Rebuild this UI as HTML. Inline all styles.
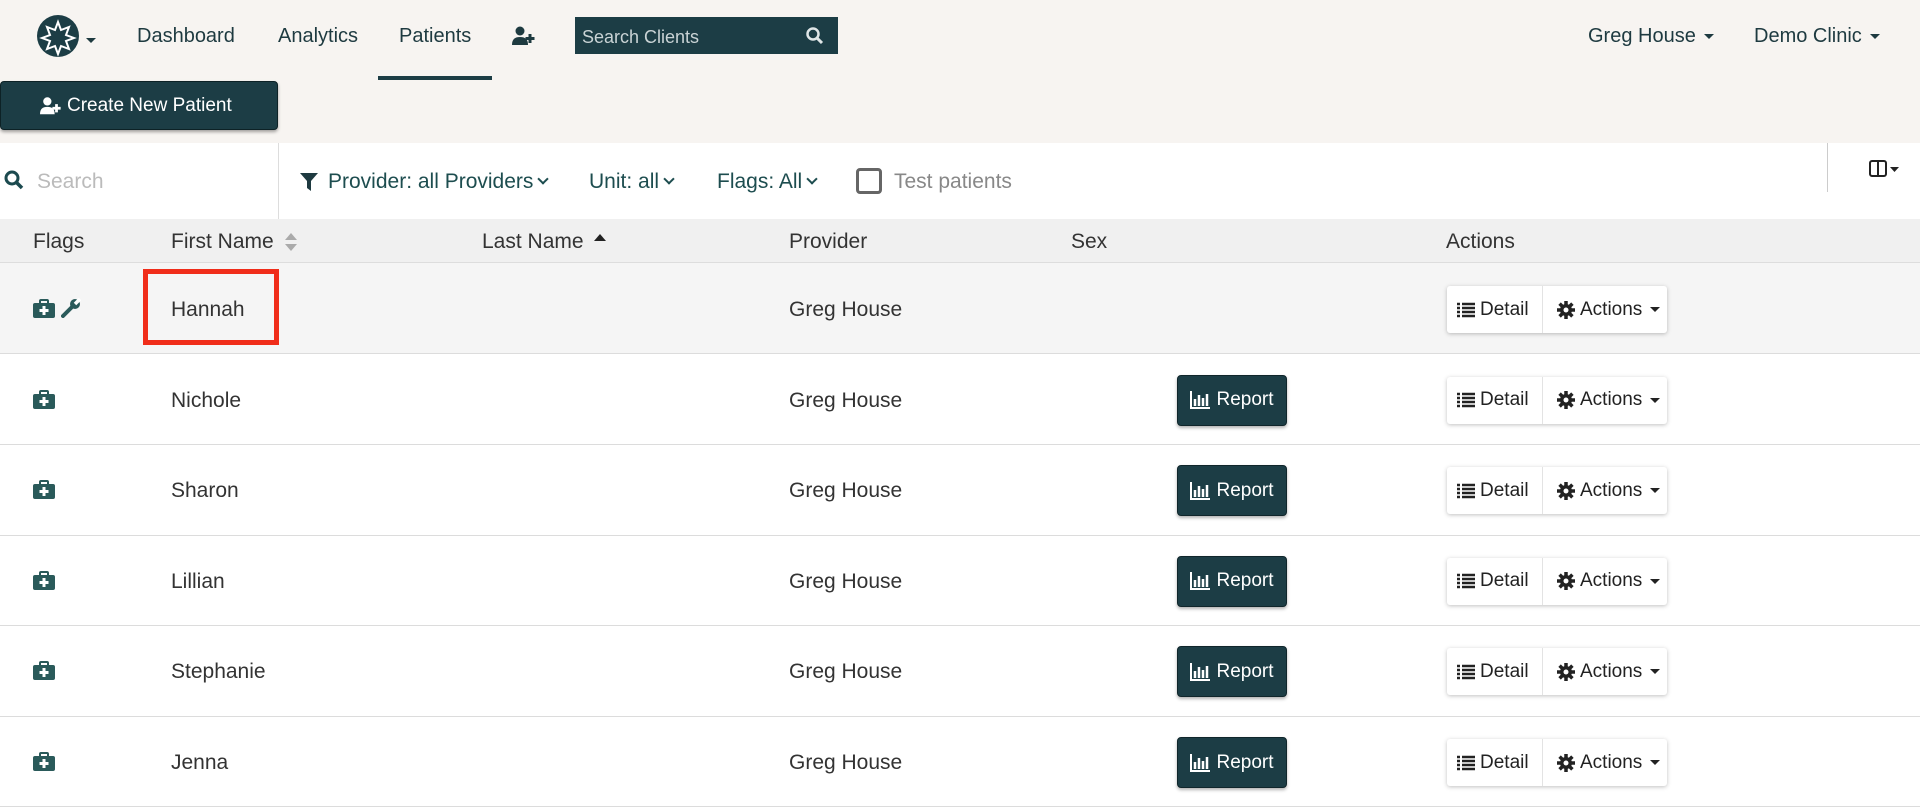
<!DOCTYPE html>
<html><head><meta charset="utf-8"><style>
*{margin:0;padding:0;box-sizing:border-box}
body{width:1920px;height:807px;overflow:hidden;background:#fff;font-family:"Liberation Sans",sans-serif;color:#333;position:relative}
.a{position:absolute;white-space:nowrap}
.nav{color:#1e3a40;font-size:20px}
.car{display:inline-block;width:0;height:0;border-left:5px solid transparent;border-right:5px solid transparent;border-top:5px solid #1e3a40;vertical-align:middle;margin-left:8px}
.row{position:absolute;left:0;width:1920px;height:91px;border-bottom:1.5px solid #dcdcdc}
.t{font-size:21px;color:#333}
.chev{display:inline-block;width:8px;height:8px;border-right:2px solid #1d4d4f;border-bottom:2px solid #1d4d4f;transform:rotate(45deg);vertical-align:middle;margin:-6px 0 0 6px}
.rep{position:absolute;left:1177px;width:110px;height:51px;background:#1c3d45;border:1px solid #10262b;border-radius:4px;color:#fff;font-size:19px;display:flex;align-items:center;justify-content:center;gap:6px;box-shadow:0 2px 3px rgba(0,0,0,.3)}
.grp{position:absolute;left:1447px;width:220px;height:47px;background:#fff;border-radius:3px;box-shadow:0 1px 4px rgba(0,0,0,.25);font-size:19px;color:#222}
.grp span{position:absolute;top:0;height:47px;display:flex;align-items:center;gap:5px}
</style></head><body>
<div class="a" style="left:0;top:0;width:1920px;height:143px;background:#f7f4f1"></div>
<svg class="a" style="left:36px;top:14px" width="44" height="44" viewBox="0 0 44 44"><circle cx="22" cy="22" r="21" fill="#1c3d45"/><path d="M22 8l3 8 8-3-3 8 8 3-8 3 3 8-8-3-3 8-3-8-8 3 3-8-8-3 8-3-3-8 8 3z" fill="none" stroke="#fff" stroke-width="2"/></svg>
<div class="a" style="left:86px;top:32px"><span class="car" style="margin:0"></span></div>
<div class="a nav" style="left:137px;top:25px">Dashboard</div>
<div class="a nav" style="left:278px;top:25px">Analytics</div>
<div class="a nav" style="left:399px;top:25px">Patients</div>
<div class="a" style="left:378px;top:76px;width:114px;height:4px;background:#1c3d45"></div>
<svg class="a" style="left:512px;top:26px" width="24" height="20" viewBox="0 0 24 20"><circle cx="8" cy="5" r="4.5" fill="#1e3a40"/><path d="M0 19c0-6 3-8 8-8s8 2 8 8z" fill="#1e3a40"/><path d="M18 8v9M13.5 12.5h9" stroke="#1e3a40" stroke-width="3"/></svg>
<div class="a" style="left:575px;top:17px;width:263px;height:37px;background:#1c3d45"></div>
<div class="a" style="left:582px;top:27px;color:#c9d3d5;font-size:18px">Search Clients</div>
<svg class="a" style="left:806px;top:27px" width="18" height="18" viewBox="0 0 18 18"><circle cx="7" cy="7" r="5.5" fill="none" stroke="#dfe6e7" stroke-width="2.5"/><path d="M11 11l5 5" stroke="#dfe6e7" stroke-width="3"/></svg>
<div class="a nav" style="left:1588px;top:25px">Greg House<span class="car"></span></div>
<div class="a nav" style="left:1754px;top:25px">Demo Clinic<span class="car"></span></div>
<div class="a" style="left:0;top:81px;width:278px;height:49px;background:#1c3d45;border:1px solid #0d2226;border-radius:4px;box-shadow:0 2px 3px rgba(0,0,0,.35)"></div>
<svg class="a" style="left:40px;top:96px" width="22" height="20" viewBox="0 0 24 20"><circle cx="8" cy="5" r="4.5" fill="#fff"/><path d="M0 19c0-6 3-8 8-8s8 2 8 8z" fill="#fff"/><path d="M18 8v9M13.5 12.5h9" stroke="#fff" stroke-width="3"/></svg>
<div class="a" style="left:67px;top:95px;color:#fff;font-size:19px">Create New Patient</div>
<svg class="a" style="left:4px;top:170px" width="20" height="20" viewBox="0 0 20 20"><circle cx="8" cy="8" r="6" fill="none" stroke="#1c4a4f" stroke-width="3"/><path d="M12 12l6 6" stroke="#1c4a4f" stroke-width="3.5"/></svg>
<div class="a" style="left:37px;top:170px;color:#bbb;font-size:21px">Search</div>
<div class="a" style="left:278px;top:143px;width:1px;height:76px;background:#ddd"></div>
<svg class="a" style="left:300px;top:173px" width="18" height="18" viewBox="0 0 18 18"><path d="M0 0h18l-7 8v10l-4-3V8z" fill="#1e3a40"/></svg>
<div class="a" style="left:328px;top:170px;color:#1d4d4f;font-size:21px">Provider: all Providers<span class="chev"></span></div>
<div class="a" style="left:589px;top:170px;color:#1d4d4f;font-size:21px">Unit: all<span class="chev"></span></div>
<div class="a" style="left:717px;top:170px;color:#1d4d4f;font-size:21px">Flags: All<span class="chev"></span></div>
<div class="a" style="left:856px;top:168px;width:26px;height:26px;border:3px solid #666;border-radius:4px"></div>
<div class="a" style="left:894px;top:170px;color:#888;font-size:21px">Test patients</div>
<div class="a" style="left:1827px;top:143px;width:1px;height:49px;background:#ccc"></div>
<svg class="a" style="left:1869px;top:160px" width="34" height="18" viewBox="0 0 34 18"><rect x="1" y="1" width="16" height="15" rx="2" fill="none" stroke="#222" stroke-width="2"/><path d="M9 1v15" stroke="#222" stroke-width="2"/><path d="M21 7h9l-4.5 5z" fill="#222"/></svg>
<div class="a" style="left:0;top:219px;width:1920px;height:44px;background:#f0f0f0;border-bottom:1.5px solid #ddd"></div>
<div class="a t" style="left:33px;top:230px">Flags</div>
<div class="a t" style="left:171px;top:230px">First Name</div>
<svg class="a" style="left:285px;top:232px" width="12" height="20" viewBox="0 0 12 20"><path d="M0 8l6-7 6 7zM0 12l6 7 6-7z" fill="#aaa"/></svg>
<div class="a t" style="left:482px;top:230px">Last Name</div>
<svg class="a" style="left:594px;top:233px" width="12" height="8" viewBox="0 0 12 8"><path d="M0 8l6-7 6 7z" fill="#222"/></svg>
<div class="a t" style="left:789px;top:230px">Provider</div>
<div class="a t" style="left:1071px;top:230px">Sex</div>
<div class="a t" style="left:1446px;top:230px">Actions</div>

<div class="row" style="top:263px;background:#f5f5f5"></div>
<div class="row" style="top:354px"></div>
<div class="row" style="top:445px"></div>
<div class="row" style="top:535px"></div>
<div class="row" style="top:626px"></div>
<div class="row" style="top:716px"></div>

<div id="rows"></div>
<script>
var names=["Hannah","Nichole","Sharon","Lillian","Stephanie","Jenna"];
var h="";
names.forEach(function(n,i){
 var c=309+i*90.6;
 h+='<svg class="a" style="left:33px;top:'+(c-10)+'px" width="22" height="19" viewBox="0 0 22 19"><rect x="7" y="1" width="8" height="4" rx="1" fill="none" stroke="#2a5a5a" stroke-width="2"/><rect x="0" y="4" width="22" height="15" rx="2" fill="#2a5a5a"/><path d="M11 7v9M6.5 11.5h9" stroke="#fff" stroke-width="3"/></svg>';
 if(i==0) h+='<svg class="a" style="left:61px;top:'+(c-11)+'px" width="20" height="20" viewBox="0 0 20 20"><path d="M2 18L11 9" stroke="#2a5a5a" stroke-width="4" stroke-linecap="round"/><circle cx="14" cy="6" r="5" fill="#2a5a5a"/><path d="M14 6l5-5" stroke="#fff" stroke-width="3.5"/></svg>';
 h+='<div class="a t" style="left:171px;top:'+(c-11)+'px">'+n+'</div>';
 h+='<div class="a t" style="left:789px;top:'+(c-11)+'px">Greg House</div>';
 if(i>0) h+='<div class="rep" style="top:'+(c-25)+'px"><svg width="20" height="18" viewBox="0 0 20 18"><path d="M1 0v17h19" stroke="#fff" stroke-width="2" fill="none"/><path d="M5 8v7M9 4v11M13 7v8M17 3v12" stroke="#fff" stroke-width="2.5"/></svg>Report</div>';
 h+='<div class="grp" style="top:'+(c-23)+'px"><span style="left:10px"><svg width="18" height="16" viewBox="0 0 18 16"><path d="M0 2h3M5 2h13M0 6h3M5 6h13M0 10h3M5 10h13M0 14h3M5 14h13" stroke="#222" stroke-width="2.5"/></svg>Detail</span><i style="position:absolute;left:95px;top:0;width:1px;height:47px;background:#e3e3e3"></i><span style="left:110px"><svg width="18" height="18" viewBox="0 0 18 18"><circle cx="9" cy="9" r="6" fill="#222"/><path d="M9 0v18M0 9h18M2.6 2.6l12.8 12.8M15.4 2.6L2.6 15.4" stroke="#222" stroke-width="3.5"/><circle cx="9" cy="9" r="2.5" fill="#fff"/></svg>Actions<i style="display:inline-block;border-left:5px solid transparent;border-right:5px solid transparent;border-top:5px solid #222;margin-left:3px"></i></span></div>';
});
document.getElementById("rows").innerHTML=h;
</script>
<div class="a" style="left:143px;top:269px;width:136px;height:76px;border:5px solid #f02d1a"></div>
</body></html>
